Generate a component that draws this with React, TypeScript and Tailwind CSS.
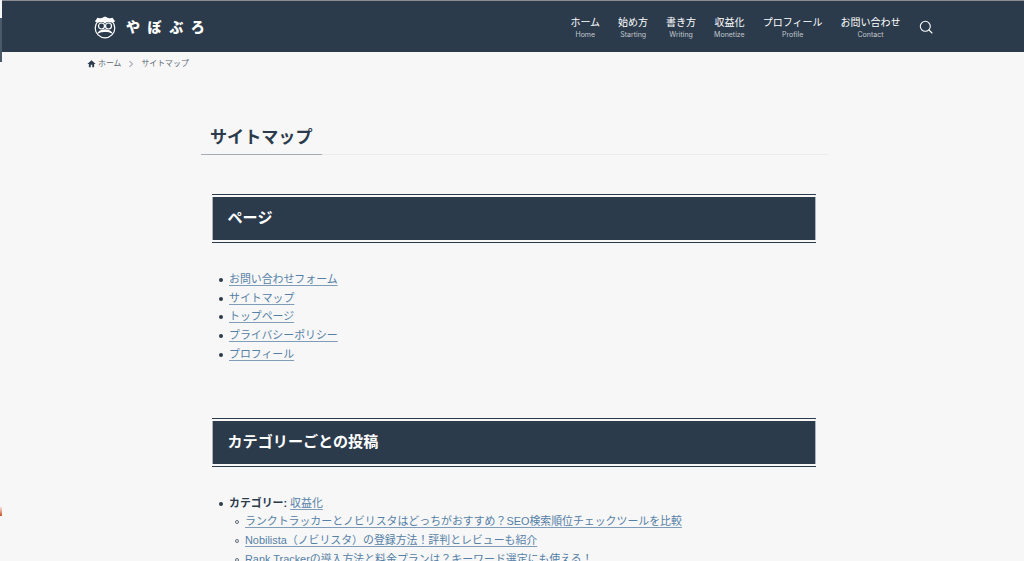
const font = { fontFamily: '"Liberation Sans", "Noto Sans CJK JP", sans-serif' };

const nav = [
  ['ホーム', 'Home'],
  ['始め方', 'Starting'],
  ['書き方', 'Writing'],
  ['収益化', 'Monetize'],
  ['プロフィール', 'Profile'],
  ['お問い合わせ', 'Contact'],
];

function Logo() {
  return (
    <svg width="24" height="24" viewBox="0 0 24 24" fill="none">
      <circle cx="12" cy="13" r="9.8" fill="#2b3b4c" stroke="#fff" strokeWidth="1.2" />
      <path d="M1.8 6.5 L4.5 2.8 L8 3.6 L12 1.6 L16 3.6 L19.5 2.8 L22.2 6.5 L19 7.6 L14 7 L12 8.4 L10 7 L5 7.6 Z" fill="#fff" />
      <circle cx="8.5" cy="11" r="3" stroke="#fff" strokeWidth="1.2" />
      <circle cx="15.5" cy="11" r="3" stroke="#fff" strokeWidth="1.2" />
      <path d="M4 19 C5 16 8.5 14.4 12 14.2 C15.5 14.4 19 16 20 19 L16.5 17.6 C14.5 16.8 9.5 16.8 7.5 17.6 Z" fill="#fff" />
    </svg>
  );
}

function Heading({ children }: { children: React.ReactNode }) {
  return (
    <div className="border-y border-[#2b3b4c] py-[2px] ml-[11px] mr-[12px]">
      <h2 className="bg-[#2b3b4c] h-[43px] flex items-center pl-[14.5px] text-white text-[15.1px] font-bold border-x border-[#aab2ba]">
        {children}
      </h2>
    </div>
  );
}

const linkCls = 'text-[#5580a6] underline underline-offset-2 decoration-[#7f9db8]';
const dotCls = 'inline-block w-[4px] h-[4px] rounded-full bg-[#2b3b4c] mr-[6px] align-[1px]';
const ringCls = 'inline-block w-[4px] h-[4px] rounded-full border-[0.8px] border-[#5f6d7a] mr-[6px] align-[1px]';

export default function App() {
  return (
    <div className="relative h-[561px] overflow-hidden bg-[#f7f7f7] text-[#2b3b4c]" style={font}>
      <div className="absolute left-0 top-[18px] w-[2px] h-[44px] bg-[#4b5a68]" />
      <div className="absolute left-0 top-[506px] w-[2px] h-[10px] bg-gradient-to-b from-[#f7f7f7] to-[#c8501e]" />
      <header className="relative ml-[2px] h-[52px] bg-[#2b3b4c] border-t border-[#8b8f93] flex items-center pl-[91px] pr-[91.5px]">
        <Logo />
        <span className="ml-[9px] text-white text-[14px] font-black tracking-[7.6px] leading-none">やぼぶろ</span>
        <nav className="ml-auto flex items-center gap-[18px]">
          {nav.map(([ja, en]) => (
            <div key={en} className="flex flex-col items-center text-white pt-[2px]">
              <span className="text-[10px] leading-[14px]">{ja}</span>
              <span className="text-[7px] leading-[10px] text-[#c3c8cd]" style={{ fontFamily: 'Inter, sans-serif' }}>{en}</span>
            </div>
          ))}
          <svg width="14" height="14" viewBox="0 0 14 14" fill="none" stroke="#fff" strokeWidth="1.1">
            <circle cx="6.3" cy="6.3" r="5" />
            <path d="M10 10 L13 13" strokeLinecap="round" />
          </svg>
        </nav>
      </header>

      <div className="h-[23px] pl-[87px] flex items-center text-[7.9px] text-[#5b6875]">
        <svg width="9" height="9" viewBox="0 0 24 24" fill="#2b3b4c"><path d="M12 3 L1 13 H5 V22 H10 V15 H14 V22 H19 V13 H23 Z" /></svg>
        <span className="ml-[2px]">ホーム</span>
        <svg className="mx-[7px]" width="6" height="8" viewBox="0 0 6 8" fill="none" stroke="#5b6875" strokeWidth="0.8"><path d="M1.5 1 L4.5 4 L1.5 7" /></svg>
        <span>サイトマップ</span>
      </div>

      <main className="ml-[201px] w-[627px]">
        <div className="mt-[41px] border-b border-[#ebebeb] h-[39px] pt-[7px] relative">
          <h1 className="pl-[9px] text-[17.1px] font-bold leading-[30px]">サイトマップ</h1>
          <div className="absolute left-0 bottom-[-1px] w-[121px] h-px bg-[#a6adb4]" />
        </div>

        <div className="mt-[39px]">
          <Heading>ページ</Heading>
        </div>
        <ul className="mt-[27px] ml-[18px] text-[10.9px] leading-[18.7px]">
          {['お問い合わせフォーム', 'サイトマップ', 'トップページ', 'プライバシーポリシー', 'プロフィール'].map((t) => (
            <li key={t}><span className={dotCls} /><a className={linkCls}>{t}</a></li>
          ))}
        </ul>

        <div className="mt-[54px]">
          <Heading>カテゴリーごとの投稿</Heading>
        </div>
        <ul className="mt-[27px] ml-[18px] text-[10.9px] leading-[18.7px]">
          <li>
            <span className={dotCls} />
            <span className="font-bold">カテゴリー: </span><a className={linkCls}>収益化</a>
            <ul className="ml-[16px]">
              <li><span className={ringCls} /><a className={linkCls}>ランクトラッカーとノビリスタはどっちがおすすめ？SEO検索順位チェックツールを比較</a></li>
              <li><span className={ringCls} /><a className={linkCls}>Nobilista（ノビリスタ）の登録方法！評判とレビューも紹介</a></li>
              <li><span className={ringCls} /><a className={linkCls}>Rank Trackerの導入方法と料金プランは？キーワード選定にも使える！</a></li>
            </ul>
          </li>
        </ul>
      </main>
    </div>
  );
}
